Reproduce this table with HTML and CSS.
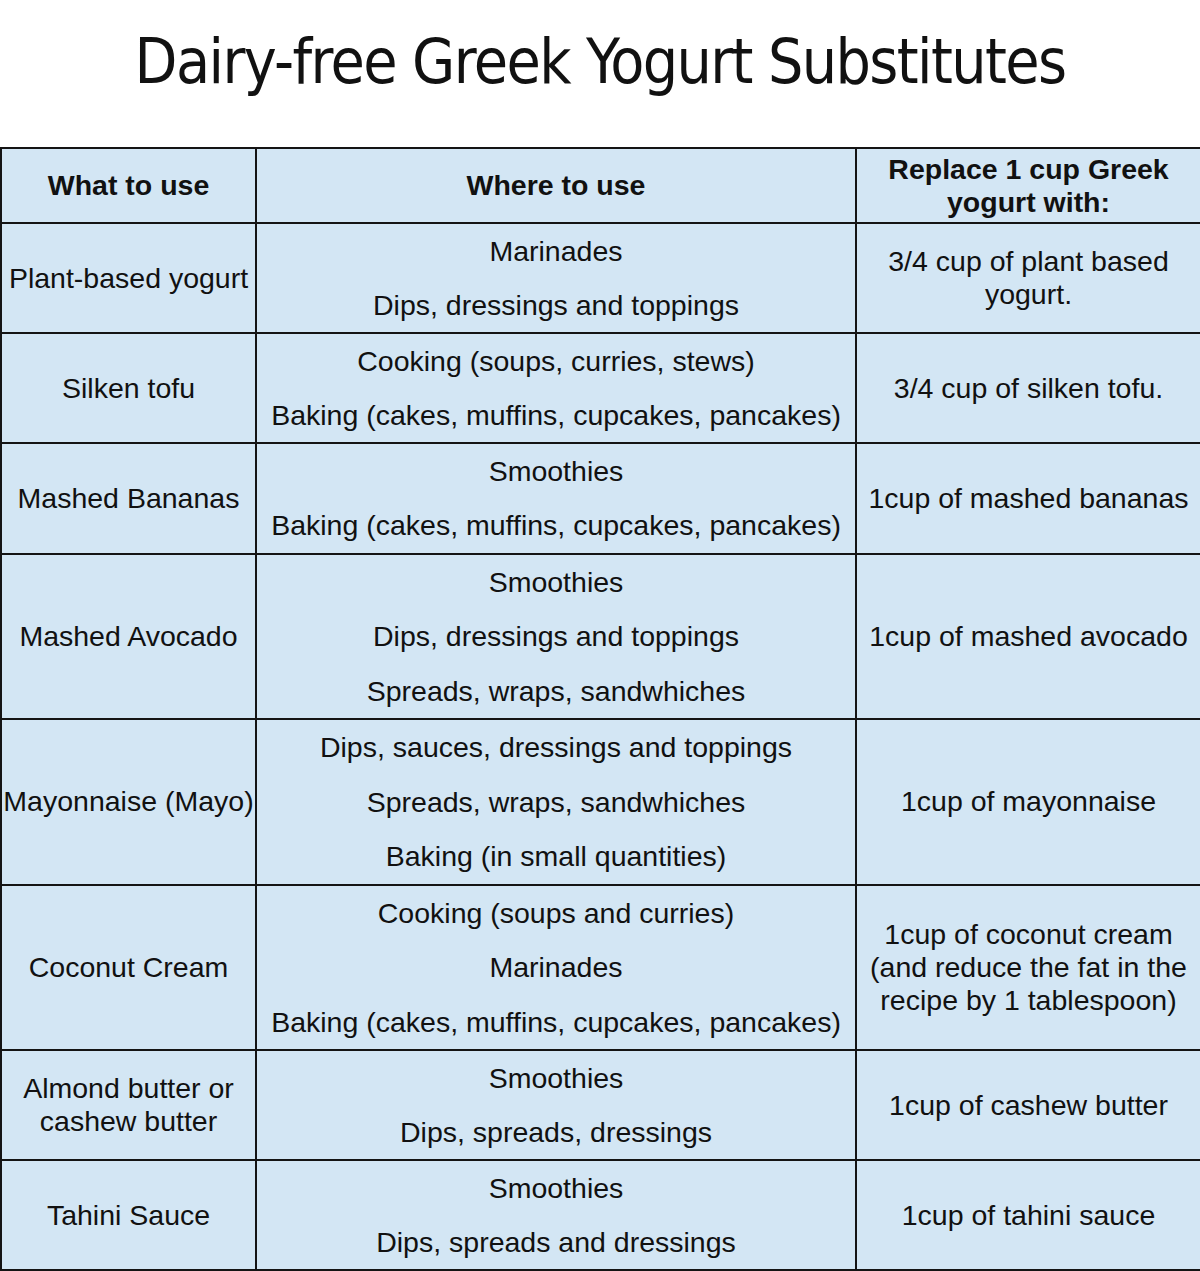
FILE: index.html
```html
<!DOCTYPE html>
<html>
<head>
<meta charset="utf-8">
<link rel="stylesheet" href="styles.css">
</head>
<body>
<h1 class="title">Dairy-free Greek Yogurt Substitutes</h1>
<table class="subs">
  <colgroup>
    <col class="c1"><col class="c2"><col class="c3">
  </colgroup>
  <thead>
    <tr class="head">
      <th>What to use</th>
      <th>Where to use</th>
      <th class="narrow">Replace 1 cup Greek yogurt with:</th>
    </tr>
  </thead>
  <tbody>
    <tr class="r2">
      <td>Plant-based yogurt</td>
      <td class="uses"><div>Marinades</div><div>Dips, dressings and toppings</div></td>
      <td class="narrow">3/4 cup of plant based yogurt.</td>
    </tr>
    <tr class="r2">
      <td>Silken tofu</td>
      <td class="uses"><div>Cooking (soups, curries, stews)</div><div>Baking (cakes, muffins, cupcakes, pancakes)</div></td>
      <td>3/4 cup of silken tofu.</td>
    </tr>
    <tr class="r2">
      <td>Mashed Bananas</td>
      <td class="uses"><div>Smoothies</div><div>Baking (cakes, muffins, cupcakes, pancakes)</div></td>
      <td>1cup of mashed bananas</td>
    </tr>
    <tr class="r3">
      <td>Mashed Avocado</td>
      <td class="uses"><div>Smoothies</div><div>Dips, dressings and toppings</div><div>Spreads, wraps, sandwhiches</div></td>
      <td>1cup of mashed avocado</td>
    </tr>
    <tr class="r3">
      <td class="tight">Mayonnaise (Mayo)</td>
      <td class="uses"><div>Dips, sauces, dressings and toppings</div><div>Spreads, wraps, sandwhiches</div><div>Baking (in small quantities)</div></td>
      <td>1cup of mayonnaise</td>
    </tr>
    <tr class="r3">
      <td>Coconut Cream</td>
      <td class="uses"><div>Cooking (soups and curries)</div><div>Marinades</div><div>Baking (cakes, muffins, cupcakes, pancakes)</div></td>
      <td class="narrow">1cup of coconut cream (and reduce the fat in the recipe by 1 tablespoon)</td>
    </tr>
    <tr class="r2">
      <td class="narrow1">Almond butter or cashew butter</td>
      <td class="uses"><div>Smoothies</div><div>Dips, spreads, dressings</div></td>
      <td>1cup of cashew butter</td>
    </tr>
    <tr class="r2">
      <td>Tahini Sauce</td>
      <td class="uses"><div>Smoothies</div><div>Dips, spreads and dressings</div></td>
      <td>1cup of tahini sauce</td>
    </tr>
  </tbody>
</table>
</body>
</html>
```

FILE: styles.css
```css
html, body {
  margin: 0;
  padding: 0;
  background: #ffffff;
}
body {
  width: 1200px;
  font-family: "Liberation Sans", Arial, sans-serif;
  color: #111;
}
.title {
  margin: 0;
  height: 147px;
  box-sizing: border-box;
  padding-top: 22px;
  font-family: "DejaVu Sans Condensed", "DejaVu Sans", Verdana, sans-serif;
  font-weight: normal;
  font-size: 62px;
  line-height: 80px;
  letter-spacing: -1.6px;
  text-align: center;
  color: #111;
}
.subs {
  width: 1200px;
  border-collapse: collapse;
  table-layout: fixed;
  background: #d3e6f4;
  font-size: 28.5px;
}
.c1 { width: 255px; }
.c2 { width: 600px; }
.c3 { width: 345px; }
.subs th, .subs td {
  border: 2.5px solid #141414;
  text-align: center;
  vertical-align: middle;
  padding: 0 4px;
  line-height: 33px;
  font-weight: normal;
}
.subs th {
  font-weight: bold;
}
.head { height: 75px; }
.subs td.uses {
  padding: 0;
}
.r2 .uses { line-height: 54.1px; }
.r3 .uses { line-height: 54.5px; }
.subs td.tight {
  padding: 0;
  white-space: nowrap;
}
.subs th.narrow, .subs td.narrow {
  padding: 0 12px;
}
.subs td.narrow1 {
  padding: 0 16px;
}
```
